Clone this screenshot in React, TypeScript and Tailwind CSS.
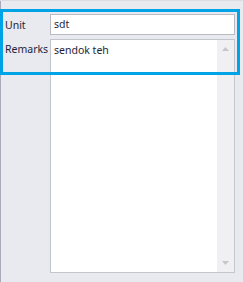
import React from "react";

export default function App() {
  return (
    <div
      className="relative w-[243px] h-[282px] overflow-hidden bg-[#e9eaef] text-[#1e1e3a]"
      style={{ fontFamily: '"Noto Sans", "DejaVu Sans", sans-serif' }}
    >
      <div className="absolute left-0 top-0 h-full w-px bg-[#a9aab8]" />
      <div className="absolute left-0 top-0 w-full h-px bg-[#dcdde2]" />
      <div className="flex flex-col gap-[4px] pt-[14px] pl-[5px] w-[235px]">
        <div className="flex items-start">
          <div className="w-[45px] text-[10.5px] leading-[20px] pt-[1px]">Unit</div>
          <div className="flex-1 h-[21px] border border-[#b8bac4] bg-white pl-[3px] text-[10.5px] leading-[19px]">
            sdt
          </div>
        </div>
        <div className="flex items-start">
          <div className="w-[45px] text-[10.5px] leading-[18px] pt-[1px]">Remarks</div>
          <div className="flex-1 h-[234px] border border-[#c4c6ce] bg-white flex">
            <div className="flex-1 pl-[3px] pt-[2px] text-[10.5px] leading-[17px]">sendok teh</div>
            <div className="w-[17px] bg-[#f0f0f3] flex flex-col items-center justify-between py-[7px]">
              <svg width="7" height="4" viewBox="0 0 7 4">
                <path d="M0 4 L3.5 0 L7 4 Z" fill="#c5c5cb" />
              </svg>
              <svg width="7" height="4" viewBox="0 0 7 4">
                <path d="M0 0 L3.5 4 L7 0 Z" fill="#c5c5cb" />
              </svg>
            </div>
          </div>
        </div>
      </div>
      <div className="absolute left-0 top-[9px] w-[240px] h-[66px] border-[3px] border-[#00a3e6]" />
    </div>
  );
}
